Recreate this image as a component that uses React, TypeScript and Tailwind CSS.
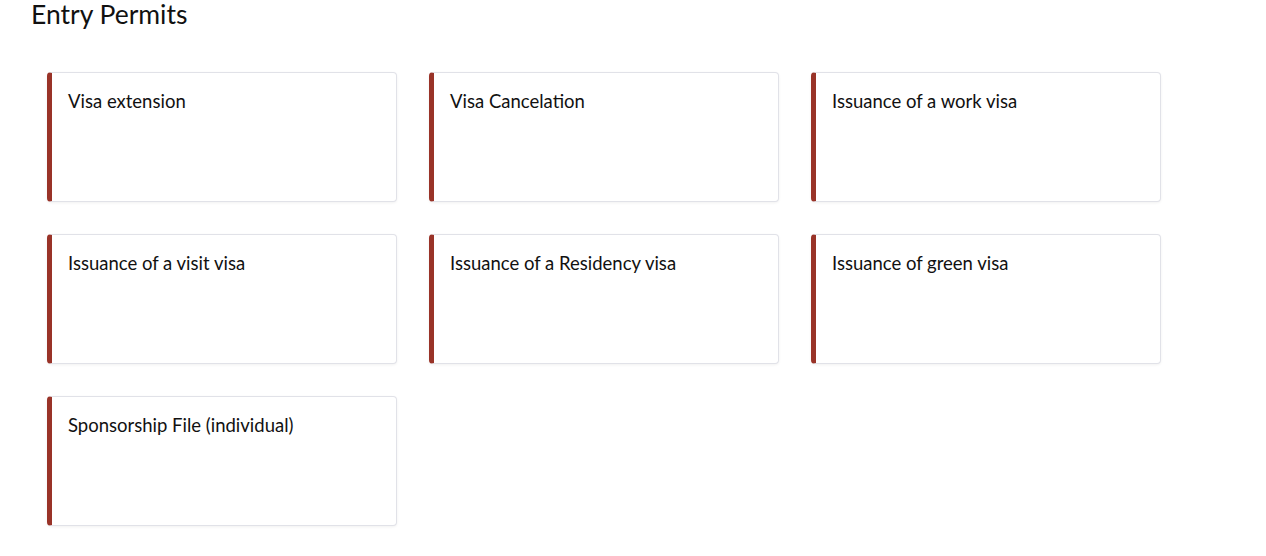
import React from "react";

const items = [
  "Visa extension",
  "Visa Cancelation",
  "Issuance of a work visa",
  "Issuance of a visit visa",
  "Issuance of a Residency visa",
  "Issuance of green visa",
  "Sponsorship File (individual)",
];

export default function App() {
  return (
    <div className="min-h-[556px] bg-white text-black" style={{ fontFamily: "Lato, 'Noto Sans', sans-serif" }}>
      <h1 className="h-[28px] pl-[31px] text-[26.5px] leading-[28px] font-normal text-[#111]">Entry Permits</h1>
      <div className="ml-[47px] mt-[44px] grid grid-cols-[350px_350px_350px] gap-x-[32px] gap-y-[32px]">
        {items.map((t) => (
          <div
            key={t}
            className="h-[130px] rounded-[4px] border border-[#e1e2e8] border-l-[5px] border-l-[#993328] bg-white pl-[16px] pt-[17px] shadow-[0_1px_3px_rgba(0,0,0,0.06)]"
          >
            <div className="text-[18.5px] leading-[22px] text-[#111]">{t}</div>
          </div>
        ))}
      </div>
    </div>
  );
}
